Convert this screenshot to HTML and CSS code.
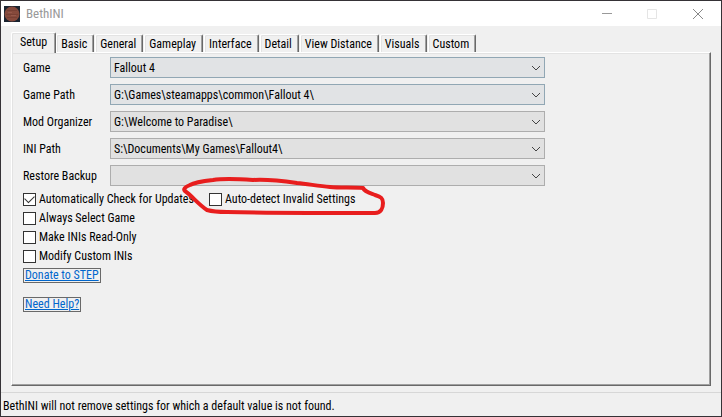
FILE: index.html
```html
<!DOCTYPE html>
<html lang="en">
<head>
    <meta charset="UTF-8">
    <meta name="viewport" content="width=device-width, initial-scale=1.0">
    <title>BethINI</title>
    <link rel="stylesheet" href="styles.css">
</head>
<body>
    <div class="window">
        <header class="titlebar">
            <svg class="app-icon" viewBox="0 0 16 16" aria-hidden="true">
                <rect width="16" height="16" fill="#1b2430"/>
                <circle cx="8" cy="8" r="7.5" fill="#864a3c"/>
                <path d="M3 4.5h10M2 8.5h12M3 11.5h10" stroke="#784034" fill="none"/>
                <path d="M4 6.5h4M7 9.5h5" stroke="#96584a" fill="none"/>
            </svg>
            <h1 class="title">BethINI</h1>
            <button class="caption" aria-label="Minimize">
                <svg viewBox="0 0 10 10"><path d="M0 4.5h10" stroke="#999"/></svg>
            </button>
            <button class="caption" aria-label="Maximize" disabled>
                <svg viewBox="0 0 10 10"><path d="M.5.5h9v9h-9z" stroke="#e5e5e5"/></svg>
            </button>
            <button class="caption" aria-label="Close">
                <svg viewBox="0 0 10 10"><path d="M0 0l10 10M10 0L0 10" stroke="#888"/></svg>
            </button>
        </header>

        <main class="content">
            <div class="tabs" role="tablist">
                <button class="tab active" role="tab" aria-selected="true">Setup</button>
                <button class="tab" role="tab">Basic</button>
                <button class="tab" role="tab">General</button>
                <button class="tab" role="tab">Gameplay</button>
                <button class="tab" role="tab">Interface</button>
                <button class="tab" role="tab">Detail</button>
                <button class="tab" role="tab">View Distance</button>
                <button class="tab" role="tab">Visuals</button>
                <button class="tab" role="tab">Custom</button>
            </div>

            <section class="panel" role="tabpanel">
                <div class="row">
                    <label for="game">Game</label>
                    <div class="combo enabled">
                        <select id="game"><option>Fallout 4</option></select>
                        <svg class="arrow" viewBox="0 0 10 6"><path d="M1 1l4 4 4-4"/></svg>
                    </div>
                </div>
                <div class="row">
                    <label for="game-path">Game Path</label>
                    <div class="combo enabled">
                        <select id="game-path"><option>G:\Games\steamapps\common\Fallout 4\</option></select>
                        <svg class="arrow" viewBox="0 0 10 6"><path d="M1 1l4 4 4-4"/></svg>
                    </div>
                </div>
                <div class="row">
                    <label for="organizer">Mod Organizer</label>
                    <div class="combo">
                        <select id="organizer"><option>G:\Welcome to Paradise\</option></select>
                        <svg class="arrow" viewBox="0 0 10 6"><path d="M1 1l4 4 4-4"/></svg>
                    </div>
                </div>
                <div class="row">
                    <label for="ini-path">INI Path</label>
                    <div class="combo">
                        <select id="ini-path"><option>S:\Documents\My Games\Fallout4\</option></select>
                        <svg class="arrow" viewBox="0 0 10 6"><path d="M1 1l4 4 4-4"/></svg>
                    </div>
                </div>
                <div class="row">
                    <label for="backup">Restore Backup</label>
                    <div class="combo">
                        <select id="backup"><option></option></select>
                        <svg class="arrow" viewBox="0 0 10 6"><path d="M1 1l4 4 4-4"/></svg>
                    </div>
                </div>

                <div class="checks">
                    <div class="check-row">
                        <label class="check first"><input type="checkbox" checked>Automatically Check for Updates</label>
                        <label class="check"><input type="checkbox">Auto-detect Invalid Settings</label>
                        <!-- hand-drawn ring around the option -->
                        <svg class="ring" viewBox="0 0 206 40" aria-hidden="true">
                            <path d="M182 10C172 9 160 10 149 9C137 8 127 6 116 5C102 3 87 1 72 2C58 1 44 0 32 2C23 3 14 4 9 7C4 9 2 11 4 13C11 18 18 27 26 32C33 34 39 34 46 34C98 35 145 35 194 35C200 35 202 30 202 25C202 20 200 19 194 17C189 15 184 14 182 10"/>
                        </svg>
                    </div>
                    <label class="check"><input type="checkbox">Always Select Game</label>
                    <label class="check"><input type="checkbox">Make INIs Read-Only</label>
                    <label class="check"><input type="checkbox">Modify Custom INIs</label>
                </div>

                <div class="links">
                    <a href="#donate">Donate to STEP</a>
                    <a href="#help">Need Help?</a>
                </div>
            </section>
        </main>

        <footer class="statusbar">BethINI will not remove settings for which a default value is not found.</footer>
    </div>
</body>
</html>
```

FILE: styles.css
```css
:root {
    --face: #f0f0f0;
    --light: #e3e3e3;
    --shadow: #a0a0a0;
    --dark: #696969;
    --link: #0066cc;
}

* {
    margin: 0;
    padding: 0;
    box-sizing: border-box;
}

body,
button,
select {
    font-family: "Roboto Condensed", Roboto, sans-serif;
    font-size: 12px;
    line-height: 14px;
    color: #000;
}

svg {
    display: block;
    fill: none;
}

.window {
    display: flex;
    flex-direction: column;
    min-height: 100vh;
    background: var(--face);
    border: 1px solid #353236;
}

.titlebar {
    display: flex;
    align-items: center;
    height: 25px;
    padding-left: 3px;
    background: #fff;
}

.app-icon {
    width: 16px;
    height: 16px;
}

.title {
    flex: 1;
    margin-left: 6px;
    font-size: 13px;
    font-weight: 400;
    color: #999;
}

.caption {
    display: flex;
    align-items: center;
    justify-content: center;
    width: 45px;
    height: 25px;
    border: none;
    background: none;
}

.caption:last-child {
    width: 47px;
}

.caption svg {
    width: 10px;
    height: 10px;
}

.content {
    flex: 1;
    display: flex;
    flex-direction: column;
    padding: 6px 10px;
}

.tabs {
    display: flex;
    align-items: flex-end;
}

.tab {
    height: 18px;
    margin-right: 1px;
    padding: 0 6px 0 4px;
    background: var(--face);
    border: 1px solid #fff;
    border-right-color: var(--dark);
    border-bottom: none;
    border-radius: 2px 2px 0 0;
    box-shadow: inset -1px 0 var(--shadow), inset 1px 1px var(--light);
}

.tab.active {
    position: relative;
    height: 21px;
    margin: 0 0 -1px;
    padding: 0 8px 2px;
}

.panel {
    flex: 1;
    padding: 4px 11px;
    border: 1px solid #fff;
    border-right-color: var(--dark);
    border-bottom-color: var(--dark);
    box-shadow: inset -1px -1px var(--shadow), inset 1px 1px var(--light);
}

.row {
    display: flex;
    align-items: center;
    margin-bottom: 6px;
}

.row label {
    width: 87px;
    white-space: nowrap;
}

.combo {
    position: relative;
    flex: 0 1 435px;
}

.combo select {
    display: block;
    width: 100%;
    height: 21px;
    padding: 0 20px 0 3px;
    border: 1px solid #adadad;
    border-radius: 0;
    background: #e1e1e1;
    appearance: none;
}

.combo.enabled select {
    border-color: #91a7b4;
    background: #e1e3e5;
}

.arrow {
    position: absolute;
    top: 8px;
    right: 4px;
    width: 10px;
    height: 6px;
    stroke: #444;
    pointer-events: none;
}

.checks {
    display: flex;
    flex-direction: column;
    align-items: flex-start;
    gap: 5px;
}

.check-row {
    position: relative;
    display: flex;
}

.check {
    display: flex;
    align-items: center;
    height: 14px;
    white-space: nowrap;
}

.check.first {
    width: 186px;
}

.check input {
    flex: none;
    width: 13px;
    height: 13px;
    margin-right: 3px;
    border: 1px solid #333;
    background: #fff;
    appearance: none;
}

.check input:checked {
    display: flex;
    align-items: flex-start;
}

.check input:checked::before {
    content: "";
    width: 9px;
    height: 5px;
    margin: 1px;
    border: solid #333;
    border-width: 0 0 1px 1px;
    transform: rotate(-45deg);
}

.ring {
    position: absolute;
    top: -14px;
    left: 158px;
    width: 206px;
    height: 40px;
    overflow: visible;
    stroke: #e81e1e;
    stroke-width: 4px;
    stroke-linecap: round;
    stroke-linejoin: round;
    pointer-events: none;
}

.links {
    display: flex;
    flex-direction: column;
    align-items: flex-start;
    gap: 14px;
    margin-top: 5px;
}

.links a {
    padding: 0 1px;
    border: 1px solid var(--dark);
    line-height: 13px;
    color: var(--link);
}

.statusbar {
    padding: 6px 2px 3px;
    border-top: 1px solid #d7d7d7;
}
```
